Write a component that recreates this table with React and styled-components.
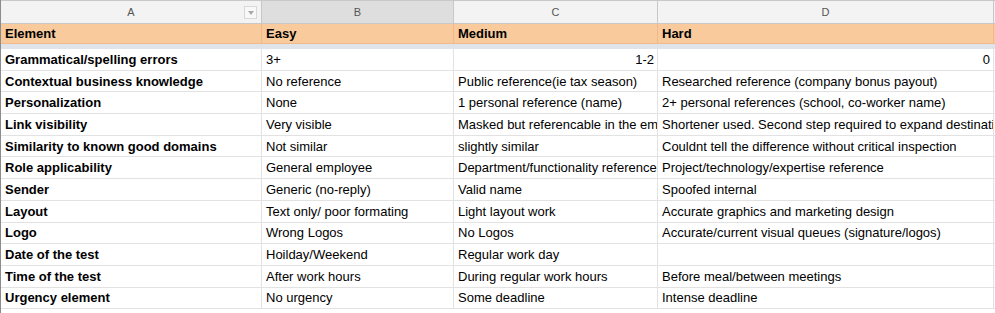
import React from "react";
import styled, { createGlobalStyle } from "styled-components";

const Global = createGlobalStyle`
    body {
        margin: 0;
        background: #ffffff;
        font-family: "Liberation Sans", Arial, sans-serif;
    }
`

const COLS = "261px 192px 204px 336px 2px";

const Sheet = styled.div`
    width: 995px;
    height: 313px;
    overflow: hidden;
    background: #fff;
    border-left: 1px solid #8c8c8c;
    box-sizing: border-box;
`
const Row = styled.div`
    display: grid;
    grid-template-columns: ${COLS};
    height: ${(p) => p.h}px;
    background: ${(p) => p.bg || "#fff"};
    border-bottom: 1px solid ${(p) => p.line || "#e2e2e2"};
    box-sizing: border-box;
`
const ColHead = styled.div`
    position: relative;
    display: flex;
    align-items: center;
    justify-content: center;
    border-right: 1px solid #c8c8c8;
    border-top: 1px solid #c8c8c8;
    background: ${(p) => (p.selected ? "#dedede" : "#f3f3f3")};
    color: #555;
    font-size: 11px;
    overflow: hidden;
`
const Filter = styled.div`
    position: absolute;
    right: 4px;
    top: 5px;
    width: 13px;
    height: 13px;
    border: 1px solid #d8d8d8;
    background: #f8f8f8;
    box-sizing: border-box;
    display: flex;
    align-items: center;
    justify-content: center;
    &::after {
        content: "";
        border-left: 3px solid transparent;
        border-right: 3px solid transparent;
        border-top: 4px solid #a8a8a8;
    }
`
const Cell = styled.div`
    display: flex;
    align-items: center;
    justify-content: ${(p) => (p.right ? "flex-end" : "flex-start")};
    padding: 0 3px 0 4px;
    border-right: 1px solid ${(p) => p.line || "#e2e2e2"};
    font-size: 13px;
    font-weight: ${(p) => (p.bold ? "bold" : "normal")};
    color: #000;
    white-space: nowrap;
    overflow: hidden;
    box-sizing: border-box;
    min-width: 0;
`
const Freeze = styled.div`
    height: 5px;
    background: #dfe3ea;
`

const rows = [
    ["Grammatical/spelling errors", "3+", "1-2", "0"],
    ["Contextual business knowledge", "No reference", "Public reference(ie tax season)", "Researched reference (company bonus payout)"],
    ["Personalization", "None", "1 personal reference (name)", "2+ personal references (school, co-worker name)"],
    ["Link visibility", "Very visible", "Masked but referencable in the email", "Shortener used. Second step required to expand destination"],
    ["Similarity to known good domains", "Not similar", "slightly similar", "Couldnt tell the difference without critical inspection"],
    ["Role applicability", "General employee", "Department/functionality reference", "Project/technology/expertise reference"],
    ["Sender", "Generic (no-reply)", "Valid name", "Spoofed internal"],
    ["Layout", "Text only/ poor formating", "Light layout work", "Accurate graphics and marketing design"],
    ["Logo", "Wrong Logos", "No Logos", "Accurate/current visual queues (signature/logos)"],
    ["Date of the test", "Hoilday/Weekend", "Regular work day", ""],
    ["Time of the test", "After work hours", "During regular work hours", "Before meal/between meetings"],
    ["Urgency element", "No urgency", "Some deadline", "Intense deadline"],
];

function App(){
    return(
        <Sheet>
            <Global />
            <Row h={24} bg="#f3f3f3" line="#c8c8c8">
                <ColHead>A<Filter /></ColHead>
                <ColHead selected>B</ColHead>
                <ColHead>C</ColHead>
                <ColHead>D</ColHead>
                <ColHead />
            </Row>
            <Row h={20} bg="#f9cb9c" line="#f0b98a">
                <Cell bold line="#f0b98a">Element</Cell>
                <Cell bold line="#f0b98a">Easy</Cell>
                <Cell bold line="#f0b98a">Medium</Cell>
                <Cell bold line="#f0b98a">Hard</Cell>
                <Cell line="#c8c8c8" />
            </Row>
            <Freeze />
            {rows.map((r, i) => (
                <Row key={i} h={21.7}>
                    <Cell bold>{r[0]}</Cell>
                    <Cell>{r[1]}</Cell>
                    <Cell right={i === 0}>{r[2]}</Cell>
                    <Cell right={i === 0}>{r[3]}</Cell>
                    <Cell line="#c8c8c8" />
                </Row>
            ))}
        </Sheet>
    )
}

export default App;
